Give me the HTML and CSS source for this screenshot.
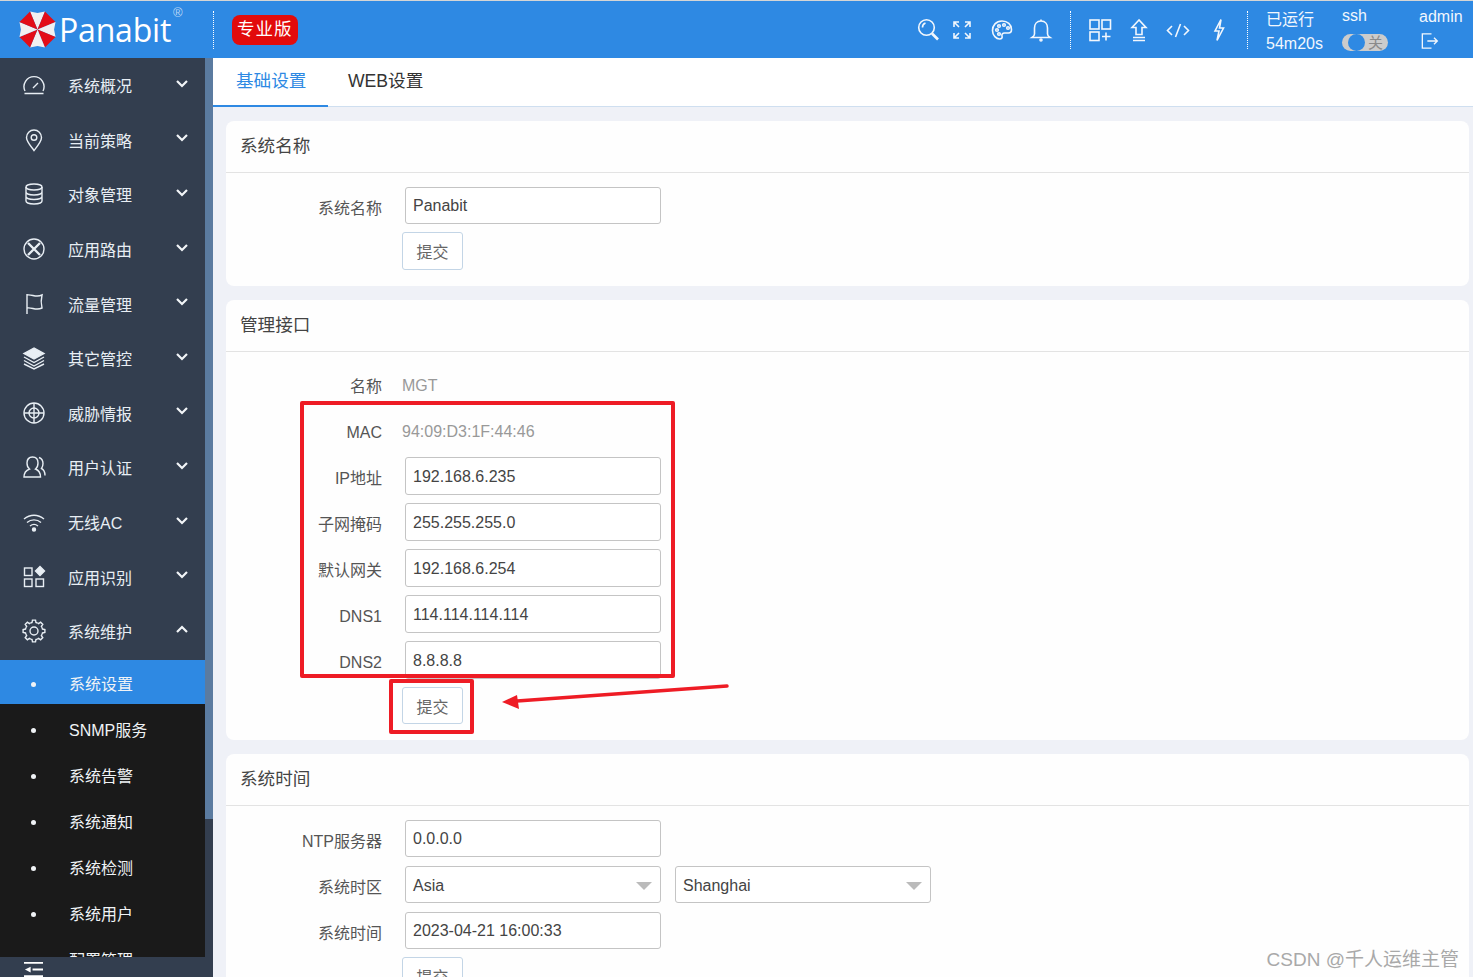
FILE: index.html
```html
<!DOCTYPE html>
<html lang="en">
<head>
  <meta charset="UTF-8" />
  <meta name="viewport" content="width=device-width, initial-scale=1.0"/>
  <title>Panabit</title>
  <link rel="stylesheet" href="styles.css">
</head>
<body>

  <div class="header">
    <div class="logo">
      <svg class="logo-mark" viewBox="0 0 40 40">
        <path fill="#f2f0f0" d="M20 20 L12.350 1.500 L20 3 L27.650 1.500 Z"/>
        <path fill="#e30d17" d="M20 20 L27.650 1.500 L33 7 L38.500 12.350 Z"/>
        <path fill="#f2f0f0" d="M20 20 L38.500 12.350 L37 20 L38.500 27.650 Z"/>
        <path fill="#e30d17" d="M20 20 L38.500 27.650 L33 33 L27.650 38.500 Z"/>
        <path fill="#f2f0f0" d="M20 20 L27.650 38.500 L20 37 L12.350 38.500 Z"/>
        <path fill="#e30d17" d="M20 20 L12.350 38.500 L7 33 L1.500 27.650 Z"/>
        <path fill="#f2f0f0" d="M20 20 L1.500 27.650 L3 20 L1.500 12.350 Z"/>
        <path fill="#e30d17" d="M20 20 L1.500 12.350 L7 7 L12.350 1.500 Z"/>
      </svg>
      <span class="logo-text">Panabit</span>
      <span class="logo-reg">®</span>
    </div>
    <div class="divider"></div>
    <span class="badge">专业版</span>

    <div class="header-right">
      <svg class="top-icon icon-search" viewBox="0 0 24 24"><circle cx="9.500" cy="9.500" r="7.800"/><path d="M5.500 9.500a4.500 4.500 0 0 1 3-4.500"/><path d="M15 15.500l6 6" stroke-width="2.600"/></svg>
      <svg class="top-icon" viewBox="0 0 24 24"><path d="M4 9V4h5M4 4l5 5M15 4h5v5M20 4l-5 5M4 15v5h5M4 20l5-5M20 15v5h-5M20 20l-5-5"/></svg>
      <svg class="top-icon icon-palette" viewBox="0 0 24 24"><path d="M12 3C6 3 2.500 7.500 2.500 12.500S6.500 21 9.500 21c2.500 0 3-1.500 2.500-3s.5-3 2.500-3h4c2 0 3-1.500 3-3.500C21.500 6.500 17.500 3 12 3z"/><circle cx="7" cy="12" r="1.300"/><circle cx="9" cy="8" r="1.300"/><circle cx="14" cy="7" r="1.300"/><circle cx="18" cy="10" r="1.300"/><circle cx="9" cy="16" r="1.300"/></svg>
      <svg class="top-icon" viewBox="0 0 24 24"><path d="M12 3c-4.500 0-6.500 3.500-6.500 7v6c0 1.500-1 2.500-2.500 3.500h18c-1.500-1-2.500-2-2.500-3.500v-6C18.500 6.500 16.500 3 12 3z"/><path d="M12 1.500V3"/><circle cx="12" cy="22" r="1"/></svg>
      <div class="divider"></div>
      <svg class="top-icon" viewBox="0 0 24 24"><rect x="2" y="2" width="9" height="9"/><rect x="14" y="2" width="8.500" height="9"/><rect x="2" y="14" width="9" height="8.500"/><path d="M14 18.500h8.500M18 14.500v8"/></svg>
      <svg class="top-icon" viewBox="0 0 24 24"><path d="M12 2l-7 7.500h4v7h6v-7h4z"/><path d="M6 19.500h12M6 22.500h12"/></svg>
      <svg class="top-icon" viewBox="0 0 24 24"><path d="M6 8l-4.500 4.500L6 17M18 8l4.500 4.500L18 17M14.500 6l-5 13"/></svg>
      <svg class="top-icon icon-flash" viewBox="0 0 24 24"><path d="M14 1.500L8 13h4l-2 9.500 6.500-12.500h-4z"/></svg>
      <div class="divider"></div>
      <div class="uptime">
        <span>已运行</span>
        <span>54m20s</span>
      </div>
      <div class="ssh">
        <span>ssh</span>
        <span class="switch"><i class="knob"></i>关</span>
      </div>
      <div class="user">
        <span>admin</span>
        <svg class="top-icon logout" viewBox="0 0 24 24"><path d="M15 3.500H4v17h11M10 12h12M18 8l4 4-4 4"/></svg>
      </div>
    </div>
  </div>

  <div class="main">
    <div class="sidebar">
      <div class="menu-wrap">
        <div class="menu">
          <div class="menu-item">
            <svg class="menu-icon" viewBox="0 0 24 24"><path d="M3 18a10 10 0 1 1 18 0M2.500 20.500h19M11 15l5-5"/></svg>
            <span>系统概况</span><svg class="chev" viewBox="0 0 14 9"><path d="M2 2l5 5 5-5"/></svg>
          </div>
          <div class="menu-item">
            <svg class="menu-icon" viewBox="0 0 24 24"><path d="M12 22.500C8 17 4.500 13.500 4.500 9.500a7.500 7.500 0 0 1 15 0c0 4-3.500 8-7.500 13z"/><circle cx="12" cy="9.500" r="2.800"/></svg>
            <span>当前策略</span><svg class="chev" viewBox="0 0 14 9"><path d="M2 2l5 5 5-5"/></svg>
          </div>
          <div class="menu-item">
            <svg class="menu-icon" viewBox="0 0 24 24"><ellipse cx="12" cy="5" rx="8" ry="3"/><path d="M4 5v14c0 1.700 3.600 3 8 3s8-1.300 8-3V5M4 10c0 1.700 3.600 3 8 3s8-1.300 8-3M4 14.500c0 1.700 3.600 3 8 3s8-1.300 8-3"/></svg>
            <span>对象管理</span><svg class="chev" viewBox="0 0 14 9"><path d="M2 2l5 5 5-5"/></svg>
          </div>
          <div class="menu-item">
            <svg class="menu-icon" viewBox="0 0 24 24"><circle cx="12" cy="12" r="10"/><path d="M6 6l12 12M18 6L6 18" stroke-width="2.400"/></svg>
            <span>应用路由</span><svg class="chev" viewBox="0 0 14 9"><path d="M2 2l5 5 5-5"/></svg>
          </div>
          <div class="menu-item">
            <svg class="menu-icon" viewBox="0 0 24 24"><path d="M5 2v20M5 3c5-1 9 3 15 0-1 4-1 9 0 13-6 3-10-1-15 0"/></svg>
            <span>流量管理</span><svg class="chev" viewBox="0 0 14 9"><path d="M2 2l5 5 5-5"/></svg>
          </div>
          <div class="menu-item">
            <svg class="menu-icon" viewBox="0 0 24 24"><path class="fill" d="M12 2L2 7.500 12 13l10-5.500z"/><path d="M2 11l10 5.500L22 11M2 14.500L12 20l10-5.500M2 18l10 5 10-5"/></svg>
            <span>其它管控</span><svg class="chev" viewBox="0 0 14 9"><path d="M2 2l5 5 5-5"/></svg>
          </div>
          <div class="menu-item">
            <svg class="menu-icon" viewBox="0 0 24 24"><circle cx="12" cy="12" r="10"/><circle cx="12" cy="12" r="5"/><path d="M12 2v20M2 12h20"/></svg>
            <span>威胁情报</span><svg class="chev" viewBox="0 0 14 9"><path d="M2 2l5 5 5-5"/></svg>
          </div>
          <div class="menu-item">
            <svg class="menu-icon" viewBox="0 0 24 24"><path d="M2 22c0-5 3-7 5.500-8-2-1.500-2.500-3.500-2.500-6 0-3.500 2-6 5.500-6s5.500 2.500 5.500 6c0 2.500-.5 4.500-2.500 6 2.500 1 5 3 5 8z"/><path d="M17 2.500c2.500 1 4 3 4 6 0 2-.5 3.500-1.500 5 2 1 3.500 3.500 3.500 7"/></svg>
            <span>用户认证</span><svg class="chev" viewBox="0 0 14 9"><path d="M2 2l5 5 5-5"/></svg>
          </div>
          <div class="menu-item">
            <svg class="menu-icon" viewBox="0 0 24 24"><path d="M2 9c6-5 14-5 20 0M5 12.500c4-3.500 10-3.500 14 0M8 16c2.500-2 5.500-2 8 0"/><circle class="fill" cx="12" cy="19.500" r="1.500"/></svg>
            <span>无线AC</span><svg class="chev" viewBox="0 0 14 9"><path d="M2 2l5 5 5-5"/></svg>
          </div>
          <div class="menu-item">
            <svg class="menu-icon" viewBox="0 0 24 24"><rect x="2.500" y="3" width="7.500" height="7.500"/><rect x="2.500" y="14" width="7.500" height="7.500"/><rect x="14" y="14" width="7.500" height="7.500"/><path class="fill" d="M18 1.500l4.500 4.500-4.500 4.500L13.500 6z"/></svg>
            <span>应用识别</span><svg class="chev" viewBox="0 0 14 9"><path d="M2 2l5 5 5-5"/></svg>
          </div>
          <div class="menu-item">
            <svg class="menu-icon" viewBox="0 0 24 24">
              <defs><path id="tooth" d="M8.670 3.960Q9.300 3.700 10.040 3.520L10.470 1.110H13.530L13.960 3.520Q14.700 3.700 15.330 3.960"/></defs>
              <use href="#tooth"/>
              <use href="#tooth" transform="rotate(45 12 12)"/>
              <use href="#tooth" transform="rotate(90 12 12)"/>
              <use href="#tooth" transform="rotate(135 12 12)"/>
              <use href="#tooth" transform="rotate(180 12 12)"/>
              <use href="#tooth" transform="rotate(225 12 12)"/>
              <use href="#tooth" transform="rotate(270 12 12)"/>
              <use href="#tooth" transform="rotate(315 12 12)"/>
              <circle cx="12" cy="12" r="4"/>
            </svg>
            <span>系统维护</span><svg class="chev" viewBox="0 0 14 9"><path d="M2 7l5-5 5 5"/></svg>
          </div>
          <div class="submenu">
            <div class="sub-item active">系统设置</div>
            <div class="sub-item">SNMP服务</div>
            <div class="sub-item">系统告警</div>
            <div class="sub-item">系统通知</div>
            <div class="sub-item">系统检测</div>
            <div class="sub-item">系统用户</div>
            <div class="sub-item">配置管理</div>
          </div>
        </div>
        <div class="scrollbar"><div class="thumb"></div></div>
      </div>
      <div class="sidebar-foot">
        <svg class="collapse" viewBox="0 0 20 20"><path d="M0 2h20M9 9h11M0 16h20"/><path class="fill" d="M7 6v6L1 9z"/></svg>
      </div>
    </div>

    <div class="content">
      <div class="tabs">
        <div class="tab active">基础设置</div>
        <div class="tab">WEB设置</div>
      </div>

      <div class="cards">
        <div class="card">
          <div class="card-title">系统名称</div>
          <div class="card-body">
            <div class="row">
              <label>系统名称</label>
              <input type="text" value="Panabit">
            </div>
            <div class="row-btn"><button>提交</button></div>
          </div>
        </div>

        <div class="card">
          <div class="card-title">管理接口</div>
          <div class="card-body tight">
            <div class="row">
              <label>名称</label>
              <span class="static">MGT</span>
            </div>
            <div class="row">
              <label>MAC</label>
              <span class="static">94:09:D3:1F:44:46</span>
            </div>
            <div class="row">
              <label>IP地址</label>
              <input type="text" value="192.168.6.235">
            </div>
            <div class="row">
              <label>子网掩码</label>
              <input type="text" value="255.255.255.0">
            </div>
            <div class="row">
              <label>默认网关</label>
              <input type="text" value="192.168.6.254">
            </div>
            <div class="row">
              <label>DNS1</label>
              <input type="text" value="114.114.114.114">
            </div>
            <div class="row">
              <label>DNS2</label>
              <input type="text" value="8.8.8.8">
            </div>
            <div class="row-btn"><button>提交</button></div>
          </div>
        </div>

        <div class="card">
          <div class="card-title">系统时间</div>
          <div class="card-body">
            <div class="row">
              <label>NTP服务器</label>
              <input type="text" value="0.0.0.0">
            </div>
            <div class="row">
              <label>系统时区</label>
              <div class="select">Asia</div>
              <div class="select second">Shanghai</div>
            </div>
            <div class="row">
              <label>系统时间</label>
              <input type="text" value="2023-04-21 16:00:33">
            </div>
            <div class="row-btn"><button>提交</button></div>
          </div>
        </div>
      </div>
    </div>
  </div>

  <!-- annotations drawn on top of the screenshot -->
  <div class="mark mark-fields"></div>
  <div class="mark mark-submit"></div>
  <svg class="mark-arrow" viewBox="0 0 240 30">
    <path d="M226 3L16 18" stroke="#ee1c25" stroke-width="3.500" stroke-linecap="round" fill="none"/>
    <path d="M1 19L16 12 18 26z" fill="#ee1c25"/>
  </svg>
  <div class="watermark">CSDN @千人运维主管</div>

</body>
</html>
```

FILE: styles.css
```css
* {
  box-sizing: border-box;
}

html, body {
  height: 100%;
}

body {
  margin: 0;
  overflow: hidden;
  font-family: "Liberation Sans", "Noto Sans CJK SC", sans-serif;
  font-size: 16px;
  color: #444;
  background: #eff1f7;
}

/* header */
.header {
  display: flex;
  align-items: center;
  height: 58px;
  background: #2e89e3;
  border-top: 1px solid #d5d5d5;
  color: #f2f7fd;
}

.logo {
  position: relative;
  display: flex;
  align-items: center;
  width: 213px;
  padding-left: 18px;
}

.logo-mark {
  width: 39px;
  height: 39px;
  flex: none;
}

.logo-text {
  margin-left: 2px;
  font-family: "Open Sans", sans-serif;
  font-size: 32px;
  letter-spacing: -0.2px;
  color: #fff;
}

.logo-reg {
  position: absolute;
  top: -3px;
  left: 173px;
  font-size: 13px;
  color: #b9d6f5;
}

.divider {
  width: 0;
  height: 38px;
  border-left: 1px dotted #fff;
}

.badge {
  margin-left: 18px;
  padding: 0 5px;
  height: 30px;
  line-height: 29px;
  font-size: 17.500px;
  letter-spacing: 1px;
  color: #fff;
  background: #e20b0b;
  border-radius: 8px;
}

.header-right {
  display: flex;
  align-items: center;
  gap: 15px;
  margin-left: auto;
}

.top-icon {
  width: 24px;
  height: 24px;
  flex: none;
  fill: none;
  stroke: #f2f7fd;
  stroke-width: 1.600;
}

.icon-search {
  margin-right: -6px;
}

.icon-palette {
  margin-left: 1px;
}

.icon-flash {
  margin: 0 -1px 0 2px;
}

.header-right .divider {
  margin: 0 2px;
}

.uptime {
  display: flex;
  flex-direction: column;
  gap: 6px;
  width: 61px;
  margin: 4px 0 0 1px;
  line-height: 18px;
  white-space: nowrap;
}

.ssh {
  display: flex;
  flex-direction: column;
  gap: 9px;
  width: 62px;
  margin-top: -1px;
  line-height: 18px;
}

.switch {
  position: relative;
  display: flex;
  align-items: center;
  justify-content: flex-end;
  width: 46px;
  height: 17px;
  padding-right: 5px;
  font-size: 15px;
  color: #8a8a8a;
  background: #ccc;
  border-radius: 9px;
}

.knob {
  position: absolute;
  left: 6px;
  top: 0;
  width: 17px;
  height: 17px;
  background: #2e89e3;
  border-radius: 50%;
}

.user {
  display: flex;
  flex-direction: column;
  gap: 5px;
  width: 54px;
  margin-top: -1px;
  line-height: 18px;
}

.logout {
  width: 20px;
  height: 20px;
}

/* layout */
.main {
  display: flex;
  height: 919px;
}

.sidebar {
  display: flex;
  flex-direction: column;
  flex: none;
  width: 213px;
  background: #333e4f;
}

.menu-wrap {
  display: flex;
  flex: 1;
  min-height: 0;
  overflow: hidden;
}

.menu {
  width: 205px;
  flex: none;
}

.scrollbar {
  flex: 1;
}

.thumb {
  height: 761px;
  background: #5b7ba0;
}

.menu-item {
  display: flex;
  align-items: center;
  height: 54.600px;
  padding: 0 16px 0 22px;
  color: #e8eef4;
}

.menu-icon {
  width: 24px;
  height: 24px;
  margin-right: 22px;
  flex: none;
  fill: none;
  stroke: #e8eef4;
  stroke-width: 1.400;
}

.fill {
  fill: #e8eef4;
}

.chev {
  width: 14px;
  height: 9px;
  margin: -4px 0 0 auto;
  fill: none;
  stroke: #f2f5f8;
  stroke-width: 2.200;
}

.submenu {
  margin-top: 1.400px;
  background: #1a1a1a;
}

.sub-item {
  position: relative;
  height: 46px;
  line-height: 50px;
  padding-left: 69px;
  color: #f0f3f6;
}

.sub-item::before {
  content: "";
  position: absolute;
  left: 31px;
  top: 22px;
  width: 5px;
  height: 5px;
  background: #f0f3f6;
  border-radius: 50%;
}

.sub-item.active {
  background: linear-gradient(#2e89e3, #2e89e3) no-repeat 0 0 / 100% 44px;
}

.sidebar-foot {
  flex: none;
  height: 20px;
  padding: 4px 0 0 24px;
  overflow: hidden;
}

.collapse {
  display: block;
  width: 19px;
  height: 19px;
  stroke: #fff;
  stroke-width: 2;
  fill: none;
}

.collapse .fill {
  fill: #fff;
  stroke: none;
}

/* content */
.content {
  flex: 1;
  min-width: 0;
}

.tabs {
  display: flex;
  height: 49px;
  background: #fff;
  border-bottom: 1px solid #cfdff0;
}

.tab {
  height: 49px;
  padding: 0 20px 0 23px;
  line-height: 47px;
  font-size: 17.600px;
  color: #333;
  white-space: nowrap;
}

.tab.active {
  width: 115px;
  padding-right: 0;
  color: #2e89e3;
  border-bottom: 2px solid #2e89e3;
}

.tab + .tab {
  padding-left: 20px;
}

.cards {
  padding: 14px 4px 0 13px;
}

.card {
  margin-bottom: 14px;
  background: #fefefe;
  border-radius: 8px;
}

.card-title {
  height: 52px;
  padding-left: 14px;
  line-height: 50px;
  font-size: 17.600px;
  color: #444;
  border-bottom: 1px solid #e3e3e3;
}

.card-body {
  padding: 14px 0 16px;
}

.card-body.tight {
  padding-top: 13px;
}

.row {
  display: flex;
  align-items: flex-start;
  height: 37px;
  margin-bottom: 9px;
}

.row label {
  flex: none;
  width: 156px;
  margin-right: 23px;
  padding-top: 13px;
  line-height: 18px;
  text-align: right;
  color: #555;
}

.row input,
.select {
  width: 256px;
  height: 37px;
  padding: 1px 7px 0;
  font: inherit;
  color: #444;
  background: #fff;
  border: 1px solid #c4c4c4;
  border-radius: 3px;
  outline: none;
}

.tight .row input {
  height: 38px;
}

.select {
  position: relative;
  line-height: 35px;
}

.select::after {
  content: "";
  position: absolute;
  right: 8px;
  top: 15px;
  border-left: 8px solid transparent;
  border-right: 8px solid transparent;
  border-top: 8px solid #bbb;
}

.select.second {
  margin-left: 14px;
}

.static {
  margin-left: -3px;
  padding-top: 12px;
  line-height: 18px;
  color: #999;
}

.row-btn {
  display: flex;
  align-items: flex-start;
  height: 37px;
  padding-left: 176px;
}

.row-btn button {
  width: 61px;
  height: 38px;
  margin-top: -1px;
  padding: 0;
  font: inherit;
  color: #666;
  background: #fff;
  border: 1px solid #c3d5e6;
  border-radius: 3px;
}

.tight .row-btn button {
  height: 37px;
  margin-top: 0;
}

/* annotations */
.mark {
  position: absolute;
  border: 4px solid #ee1c25;
  border-radius: 2px;
}

.mark-fields {
  left: 300px;
  top: 401px;
  width: 375px;
  height: 277px;
}

.mark-submit {
  left: 389px;
  top: 679px;
  width: 85px;
  height: 55px;
}

.mark-arrow {
  position: absolute;
  left: 501px;
  top: 683px;
  width: 240px;
  height: 30px;
}

.watermark {
  position: absolute;
  right: 14px;
  top: 944px;
  font-size: 19px;
  color: #a9a9a9;
}
```
